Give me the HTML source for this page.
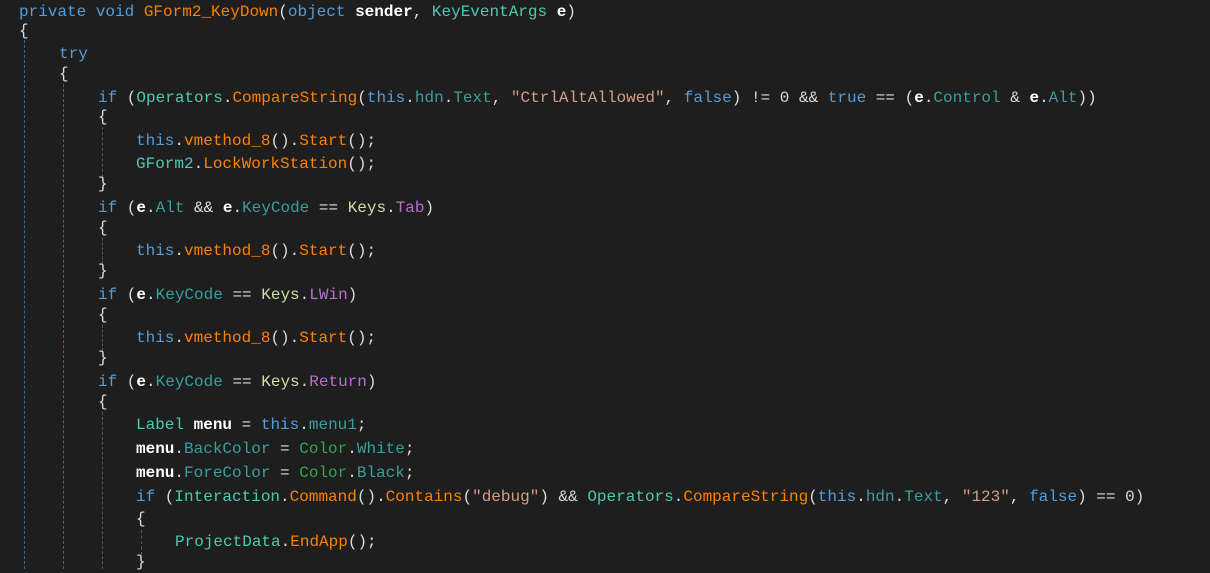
<!DOCTYPE html><html><head><meta charset="utf-8"><style>
body{margin:0;width:1210px;height:569px;background:#1e1e1e;overflow:hidden;position:relative;font-family:"Liberation Mono","Noto Sans CJK SC",monospace;font-size:16px;color:#dcdcdc}
.l{position:absolute;height:22px;line-height:22px;white-space:pre}
.k{color:#569cd6}.m{color:#ff8000}.t{color:#4ec9b0}.p{color:#3a9e9e}.s{color:#d69d85}.v{color:#fff;font-weight:bold}.e{color:#c8e0a0}.u{color:#b86fd0}.g{color:#2ea84a}
.g0,.g1,.g2,.g3{position:absolute;width:0;border-left:1px dashed}
.g0{border-color:#2a6a9a}.g1{border-color:#8a4a4a}.g2{border-color:#2e6e2e}.g3{border-color:#555}
</style></head><body>
<div class="g0" style="left:24px;top:40px;height:529px"></div>
<div class="g1" style="left:63px;top:84px;height:485px"></div>
<div class="g2" style="left:102px;top:127px;height:50px"></div>
<div class="g2" style="left:102px;top:238px;height:26px"></div>
<div class="g2" style="left:102px;top:325px;height:26px"></div>
<div class="g2" style="left:102px;top:412px;height:157px"></div>
<div class="g3" style="left:141px;top:530px;height:25px"></div>
<div class="l" style="left:19px;top:1px"><span class="k">private void</span> <span class="m">GForm2_KeyDown</span>(<span class="k">object</span> <span class="v">sender</span>, <span class="t">KeyEventArgs</span> <span class="v">e</span>)</div>
<div class="l" style="left:19px;top:20px">{</div>
<div class="l" style="left:59px;top:43px"><span class="k">try</span></div>
<div class="l" style="left:59px;top:63px">{</div>
<div class="l" style="left:98px;top:87px"><span class="k">if</span> (<span class="t">Operators</span>.<span class="m">CompareString</span>(<span class="k">this</span>.<span class="p">hdn</span>.<span class="p">Text</span>, <span class="s">"CtrlAltAllowed"</span>, <span class="k">false</span>) != 0 &amp;&amp; <span class="k">true</span> == (<span class="v">e</span>.<span class="p">Control</span> &amp; <span class="v">e</span>.<span class="p">Alt</span>))</div>
<div class="l" style="left:98px;top:106px">{</div>
<div class="l" style="left:136px;top:130px"><span class="k">this</span>.<span class="m">vmethod_8</span>().<span class="m">Start</span>();</div>
<div class="l" style="left:136px;top:153px"><span class="t">GForm2</span>.<span class="m">LockWorkStation</span>();</div>
<div class="l" style="left:98px;top:173px">}</div>
<div class="l" style="left:98px;top:197px"><span class="k">if</span> (<span class="v">e</span>.<span class="p">Alt</span> &amp;&amp; <span class="v">e</span>.<span class="p">KeyCode</span> == <span class="e">Keys</span>.<span class="u">Tab</span>)</div>
<div class="l" style="left:98px;top:217px">{</div>
<div class="l" style="left:136px;top:240px"><span class="k">this</span>.<span class="m">vmethod_8</span>().<span class="m">Start</span>();</div>
<div class="l" style="left:98px;top:260px">}</div>
<div class="l" style="left:98px;top:284px"><span class="k">if</span> (<span class="v">e</span>.<span class="p">KeyCode</span> == <span class="e">Keys</span>.<span class="u">LWin</span>)</div>
<div class="l" style="left:98px;top:304px">{</div>
<div class="l" style="left:136px;top:327px"><span class="k">this</span>.<span class="m">vmethod_8</span>().<span class="m">Start</span>();</div>
<div class="l" style="left:98px;top:347px">}</div>
<div class="l" style="left:98px;top:371px"><span class="k">if</span> (<span class="v">e</span>.<span class="p">KeyCode</span> == <span class="e">Keys</span>.<span class="u">Return</span>)</div>
<div class="l" style="left:98px;top:391px">{</div>
<div class="l" style="left:136px;top:414px"><span class="t">Label</span> <span class="v">menu</span> = <span class="k">this</span>.<span class="p">menu1</span>;</div>
<div class="l" style="left:136px;top:438px"><span class="v">menu</span>.<span class="p">BackColor</span> = <span class="g">Color</span>.<span class="p">White</span>;</div>
<div class="l" style="left:136px;top:462px"><span class="v">menu</span>.<span class="p">ForeColor</span> = <span class="g">Color</span>.<span class="p">Black</span>;</div>
<div class="l" style="left:136px;top:486px"><span class="k">if</span> (<span class="t">Interaction</span>.<span class="m">Command</span>().<span class="m">Contains</span>(<span class="s">"debug"</span>) &amp;&amp; <span class="t">Operators</span>.<span class="m">CompareString</span>(<span class="k">this</span>.<span class="p">hdn</span>.<span class="p">Text</span>, <span class="s">"123"</span>, <span class="k">false</span>) == 0)</div>
<div class="l" style="left:136px;top:508px">{</div>
<div class="l" style="left:175px;top:531px"><span class="t">ProjectData</span>.<span class="m">EndApp</span>();</div>
<div class="l" style="left:136px;top:551px">}</div>
</body></html>
